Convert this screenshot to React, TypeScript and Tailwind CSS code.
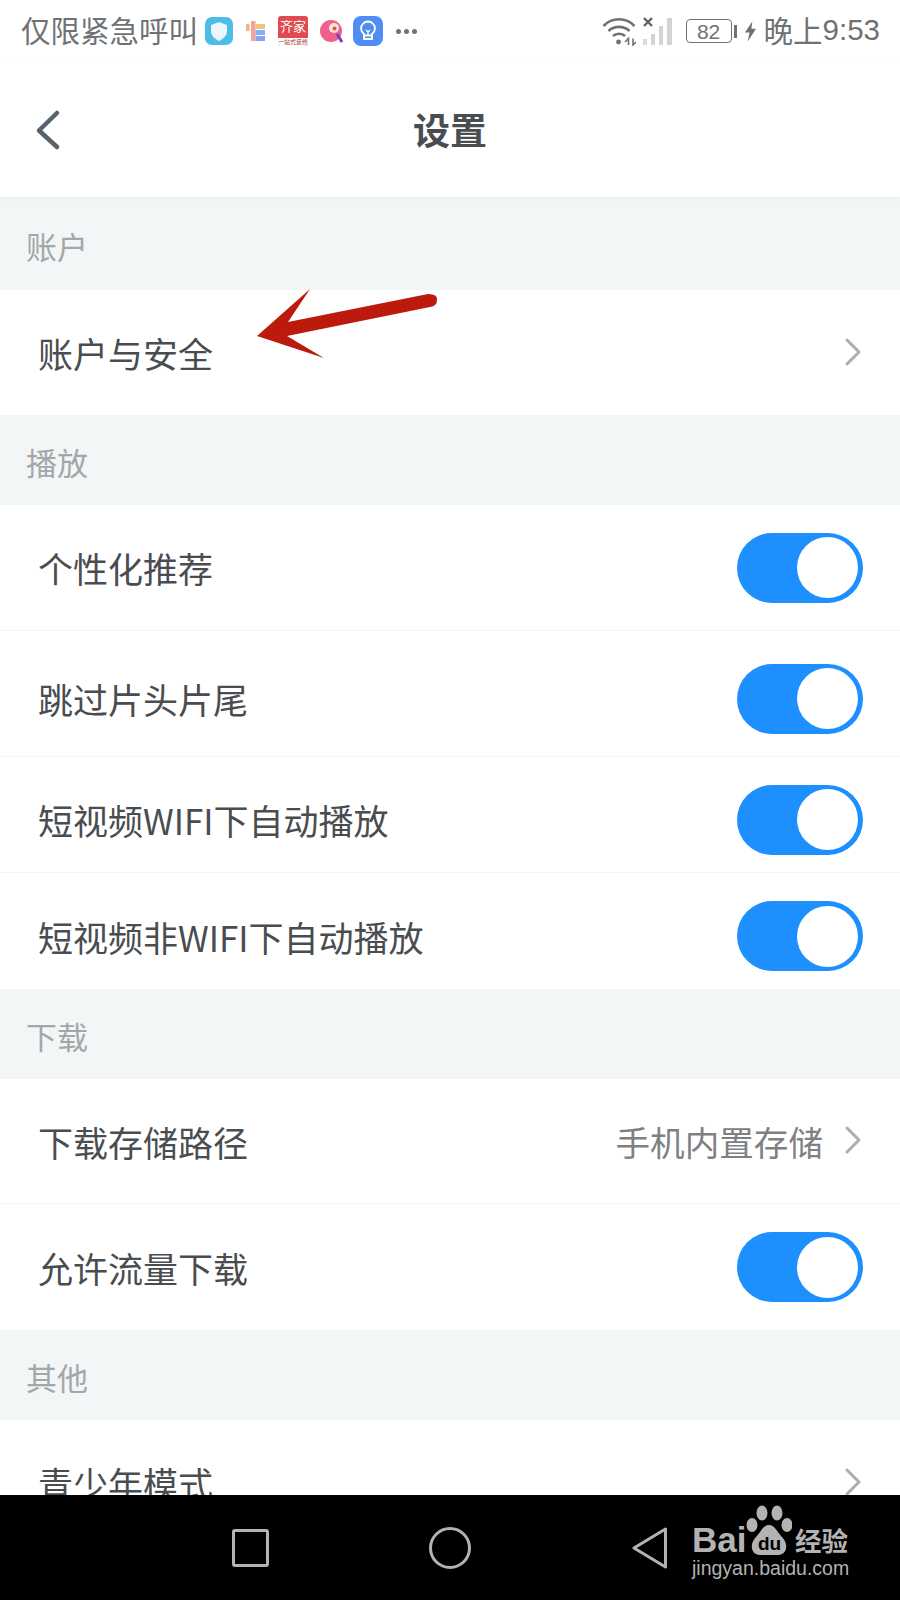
import React from "react";

const FONT = { fontFamily: '"Noto Sans CJK SC", "Liberation Sans", sans-serif' };
const LATIN = { fontFamily: '"Liberation Sans", sans-serif' };

function Toggle() {
  return (
    <div className="flex h-[70px] w-[126px] shrink-0 items-center justify-end rounded-full bg-[#1e8fff] pr-[5px]">
      <div className="h-[61px] w-[61px] rounded-full bg-white" />
    </div>
  );
}

function Chevron() {
  return (
    <svg className="mb-[2px] shrink-0" width="20" height="30" viewBox="0 0 20 30" fill="none" stroke="#a9aeb3" strokeWidth="3" strokeLinecap="round" strokeLinejoin="round">
      <path d="M4 3 L16 15 L4 27" />
    </svg>
  );
}

function SectionTitle({ children, h = "h-[90px]" }: { children: React.ReactNode; h?: string }) {
  return (
    <div className={`flex ${h} items-center bg-[#f3f6f7] pl-[26px] pt-[3px] text-[31px] text-[#a4a7a9]`}>
      <span className="leading-none">{children}</span>
    </div>
  );
}

function Row({ label, right, h, border = true, pad = "" }: { label: string; right: React.ReactNode; h: string; border?: boolean; pad?: string }) {
  return (
    <div className={`flex ${h} ${pad} items-center justify-between bg-white pl-[38px] pr-[37px] ${border ? "border-b border-[#f4f5f6]" : ""}`}>
      <span className="text-[35px] leading-none text-[#4a4d50]">{label}</span>
      {right}
    </div>
  );
}

function AppIcons() {
  return (
    <div className="ml-[7px] flex items-center">
      <svg width="28" height="28" viewBox="0 0 28 28">
        <rect width="28" height="28" rx="7" fill="#4cbde8" />
        <path d="M14 5 L22 8 V14 C22 19 18 22 14 24 C10 22 6 19 6 14 V8 Z" fill="#eaf7fc" />
      </svg>
      <svg className="ml-[13px]" width="19" height="20" viewBox="0 0 19 20">
        <rect x="0" y="3" width="3.5" height="7" fill="#f7b08a" />
        <rect x="5" y="0" width="4.5" height="20" fill="#f3a39a" />
        <rect x="9.5" y="3" width="9.5" height="5" fill="#f5c27c" />
        <rect x="9.5" y="9" width="9.5" height="5" fill="#7cb4f5" />
        <rect x="9.5" y="15" width="9.5" height="5" fill="#8f9ff2" />
      </svg>
      <div className="ml-[13px] flex h-[30px] w-[30px] flex-col items-center overflow-hidden rounded-[3px] bg-[#e04a50] pt-[2px] text-[13px] leading-[15px] text-white">
        <span className="whitespace-nowrap">齐家</span>
        <span className="mt-[5px] w-full whitespace-nowrap bg-white text-center text-[6px] leading-[8px] text-[#a8343a]">一站式装修</span>
      </div>
      <svg className="ml-[12px]" width="23" height="24" viewBox="0 0 23 24">
        <circle cx="11" cy="12" r="11" fill="#f0608c" />
        <circle cx="14" cy="9" r="5" fill="#fbe3d8" />
        <circle cx="14.5" cy="9.5" r="2" fill="#e8553f" />
        <path d="M17 15 L22 23" stroke="#7a3fc0" strokeWidth="3" />
      </svg>
      <svg className="ml-[10px]" width="30" height="30" viewBox="0 0 30 30" fill="none">
        <rect width="30" height="30" rx="8" fill="#4f8df5" />
        <path d="M11 18 C8 15.5 8 13.5 8 12.5 A7 7 0 0 1 22 12.5 C22 13.5 22 15.5 19 18 V23 H11 Z M11 19.5 H19" stroke="#fff" strokeWidth="1.8" strokeLinejoin="round" />
        <path d="M13 14 L15 16 L17 14 M15 16 V19" stroke="#fff" strokeWidth="1.3" />
      </svg>
      <div className="ml-[13px] flex gap-[3px]">
        <div className="h-[5px] w-[5px] rounded-full bg-[#6f7275]" />
        <div className="h-[5px] w-[5px] rounded-full bg-[#6f7275]" />
        <div className="h-[5px] w-[5px] rounded-full bg-[#6f7275]" />
      </div>
    </div>
  );
}

function SysIcons() {
  return (
    <div className="flex items-center">
      <svg width="34" height="30" viewBox="0 0 34 30" fill="none" stroke="#6f7275" strokeWidth="2.6">
        <path d="M1.5 10 C10 1 24 1 32.5 10" />
        <path d="M6.5 15 C12 9.5 22 9.5 27.5 15" />
        <path d="M11 20 C14 17 20 17 23 20" />
        <circle cx="16.5" cy="26" r="2.4" fill="#6f7275" stroke="none" />
        <path d="M23 26 L26.5 22.5 V29 M31 22.5 V29 L34 26" strokeWidth="1.6" />
      </svg>
      <svg className="ml-[7px]" width="30" height="28" viewBox="0 0 30 28">
        <path d="M1 1 L9 9 M9 1 L1 9" stroke="#5f6265" strokeWidth="2.4" />
        <rect x="0" y="22" width="4" height="6" fill="#d9d9d9" />
        <rect x="8" y="17" width="4" height="11" fill="#d4d4d4" />
        <rect x="16" y="9" width="4" height="19" fill="#d4d4d4" />
        <rect x="24" y="1" width="5" height="27" fill="#d4d4d4" />
      </svg>
      <div className="ml-[13px] flex h-[24px] w-[46px] items-center justify-center rounded-[4px] border border-[#6f7275] text-[21px] leading-none text-[#6f7275]" style={LATIN}>
        82
      </div>
      <div className="ml-[2px] h-[13px] w-[3px] bg-[#6f7275]" />
      <svg className="ml-[8px]" width="11" height="21" viewBox="0 0 12 22">
        <path d="M8 0 L0 12 H5 L3 22 L12 8 H7 Z" fill="#6f7275" />
      </svg>
      <span className="mb-[2px] ml-[8px] text-[29.5px] leading-none text-[#6f7275]" style={FONT}>
        晚上
      </span>
      <span className="mb-[2px] text-[29.5px] leading-none text-[#6f7275]" style={LATIN}>
        9:53
      </span>
    </div>
  );
}

function BaiduLogo() {
  return (
    <div className="absolute left-[692px] top-[1505px] flex flex-col items-start">
      <div className="flex h-[50px] items-end">
        <span className="w-[54px] text-[35px] font-bold leading-[30px] text-[#b3b3b3]" style={LATIN}>
          Bai
        </span>
        <div className="relative h-[50px] w-[46px] shrink-0">
          <svg width="46" height="50" viewBox="0 0 46 50" fill="#b3b3b3">
            <ellipse cx="6" cy="20" rx="5.5" ry="7" />
            <ellipse cx="16" cy="8" rx="5.5" ry="7.5" />
            <ellipse cx="31" cy="8" rx="5.5" ry="7.5" />
            <ellipse cx="41" cy="20" rx="5.5" ry="7" />
            <path d="M23 20 C29 20 31 27 36 32 C43 39 41 50 32 50 H14 C5 50 3 39 10 32 C15 27 17 20 23 20 Z" />
          </svg>
          <span className="absolute left-[12px] top-[31px] text-[19px] font-bold leading-[16px] text-black" style={LATIN}>
            du
          </span>
        </div>
        <span className="mb-[1px] ml-[3px] whitespace-nowrap text-[26.5px] font-bold leading-[28px] text-[#b3b3b3]" style={FONT}>
          经验
        </span>
      </div>
      <span className="mt-[2px] whitespace-nowrap text-[19.5px] leading-[22px] text-[#b3b3b3]" style={LATIN}>
        jingyan.baidu.com
      </span>
    </div>
  );
}

export default function App() {
  return (
    <div className="relative flex h-[1600px] w-[900px] flex-col overflow-hidden bg-white" style={FONT}>
      <div className="min-h-0 flex-1 overflow-hidden">
        <div className="flex h-[62px] items-center justify-between pl-[21px] pr-[20px]">
          <div className="flex items-center">
            <span className="mb-[2px] text-[29.5px] leading-none text-[#6f7275]">仅限紧急呼叫</span>
            <AppIcons />
          </div>
          <SysIcons />
        </div>
        <div className="relative z-10 flex h-[135px] items-center justify-center bg-white shadow-[0_2px_6px_rgba(0,0,0,0.03)]">
          <svg className="absolute left-[34px] top-[47px]" width="28" height="42" viewBox="0 0 28 42" fill="none" stroke="#56636d" strokeWidth="4.5" strokeLinecap="round" strokeLinejoin="round">
            <path d="M23 4 L5 21.5 L23 38" />
          </svg>
          <span className="text-[37px] font-bold leading-none text-[#4a4d50]">设置</span>
        </div>
        <SectionTitle h="h-[93px]">账户</SectionTitle>
        <Row h="h-[125px]" label="账户与安全" right={<Chevron />} border={false} />
        <SectionTitle>播放</SectionTitle>
        <Row h="h-[126px]" label="个性化推荐" right={<Toggle />} />
        <Row h="h-[126px]" pad="pt-[10px]" label="跳过片头片尾" right={<Toggle />} />
        <Row h="h-[116px]" pad="pt-[10px]" label="短视频WIFI下自动播放" right={<Toggle />} />
        <Row h="h-[116px]" pad="pt-[10px]" label="短视频非WIFI下自动播放" right={<Toggle />} border={false} />
        <SectionTitle>下载</SectionTitle>
        <Row
          h="h-[125px]"
          label="下载存储路径"
          right={
            <div className="flex items-center gap-[20px]">
              <span className="text-[34.6px] leading-none text-[#7e8184]">手机内置存储</span>
              <Chevron />
            </div>
          }
        />
        <Row h="h-[126px]" label="允许流量下载" right={<Toggle />} border={false} />
        <SectionTitle>其他</SectionTitle>
        <Row h="h-[125px]" label="青少年模式" right={<Chevron />} border={false} />
      </div>
      <div className="flex h-[105px] shrink-0 items-center bg-black pl-[232px]">
        <div className="h-[38px] w-[37px] shrink-0 rounded-[3px] border-[3px] border-[#b3b3b3]" />
        <div className="ml-[160px] h-[42px] w-[42px] shrink-0 rounded-full border-[3px] border-[#b3b3b3]" />
        <svg className="ml-[161px] shrink-0" width="36" height="42" viewBox="0 0 36 42" fill="none" stroke="#b3b3b3" strokeWidth="3" strokeLinejoin="round">
          <path d="M33.5 2 V40 L2 21 Z" />
        </svg>
      </div>
      <BaiduLogo />
      <svg className="absolute left-[250px] top-[285px]" width="190" height="80" viewBox="0 0 190 80">
        <path d="M7 51 L60 4 L38 37 L178 9 Q188 9 187 15 Q187 21 180 22 L37 51 L74 73 Z" fill="#bb1a0c" />
      </svg>
    </div>
  );
}
